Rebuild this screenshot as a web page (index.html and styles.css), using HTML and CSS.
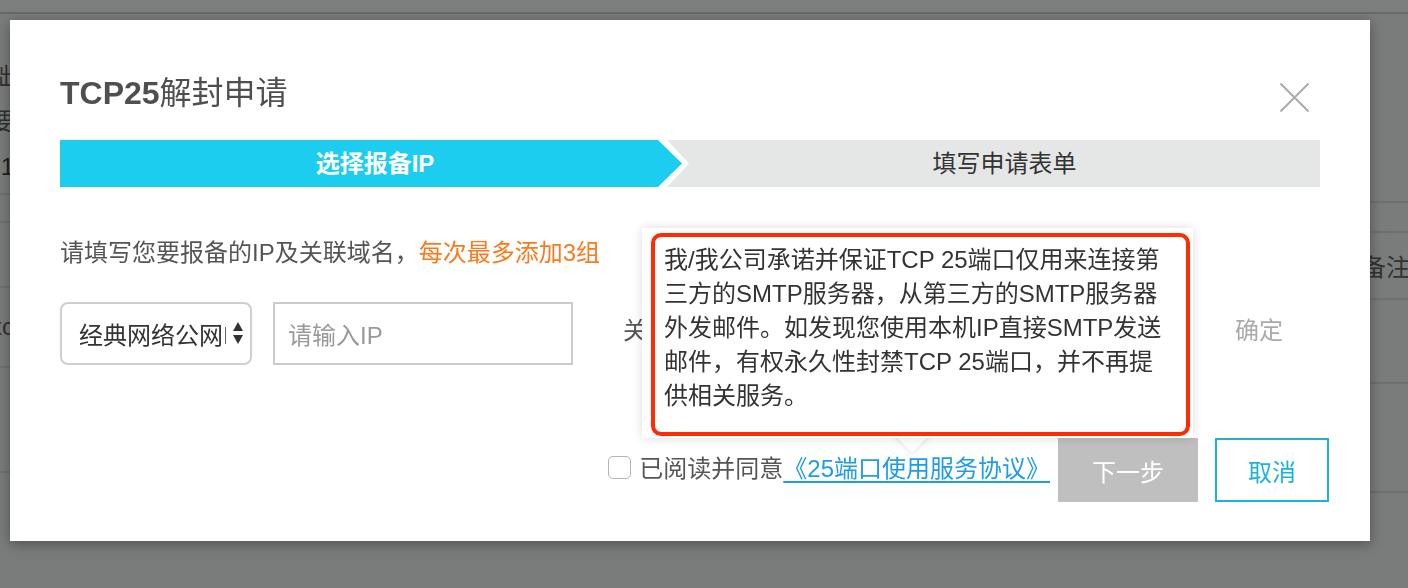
FILE: index.html
```html
<!DOCTYPE html>
<html lang="zh-CN">
<head>
<meta charset="utf-8">
<title>TCP25解封申请</title>
<link rel="stylesheet" href="styles.css">
</head>
<body>
<div class="page">
  <div class="topbar"></div>
  <div class="page-body">
    <div class="bg-col bg-left">
      <div class="bg-row bg-l1">
        <span class="bg-text">基础</span>
        <span class="bg-text">需要</span>
        <span class="bg-text bg-num">1</span>
      </div>
      <div class="bg-row bg-l2"></div>
      <div class="bg-row bg-l3"></div>
      <div class="bg-row bg-l4"><span class="bg-text">xc</span></div>
      <div class="bg-row bg-l5"></div>
    </div>
    <div class="bg-col bg-right">
      <div class="bg-row bg-r1"></div>
      <div class="bg-row bg-r2"></div>
      <div class="bg-row bg-r3"><span class="bg-text">备注</span></div>
      <div class="bg-row bg-r4"></div>
      <div class="bg-row bg-r5"></div>
    </div>
  </div>
</div>

<div class="modal">
  <div class="modal-header">
    <h2 class="modal-title"><b>TCP25</b>解封申请</h2>
    <svg class="close" width="29" height="29" viewBox="0 0 29 29" aria-label="关闭">
      <path d="M0.5 0.5L28.5 28.5M28.5 0.5L0.5 28.5" stroke="#ababab" stroke-width="2" fill="none"/>
    </svg>
  </div>

  <div class="steps">
    <div class="step step-active">选择报备IP</div>
    <div class="step step-next">填写申请表单</div>
  </div>

  <p class="hint">请填写您要报备的IP及关联域名，<span class="hint-em">每次最多添加3组</span></p>

  <div class="form-row">
    <div class="select">
      <span class="select-text">经典网络公网IP</span>
      <svg class="select-arrows" width="10" height="23" viewBox="0 0 10 23">
        <path d="M5 0L10 9H0Z" fill="#333"/>
        <path d="M0 13H10L5 22Z" fill="#333"/>
      </svg>
    </div>
    <div class="input input-ip">请输入IP</div>
    <span class="label">关联域名</span>
    <div class="input input-domain"></div>
    <span class="confirm">确定</span>
  </div>

  <div class="footer">
    <input type="checkbox" class="check">
    <span class="agree">已阅读并同意</span>
    <a class="agree-link" href="#">《25端口使用服务协议》</a>
    <button class="btn btn-next" type="button">下一步</button>
    <button class="btn btn-cancel" type="button">取消</button>
  </div>

  <div class="tooltip">
    我/我公司承诺并保证TCP 25端口仅用来连接第三方的SMTP服务器，从第三方的SMTP服务器外发邮件。如发现您使用本机IP直接SMTP发送邮件，有权永久性封禁TCP 25端口，并不再提供相关服务。
    <div class="annot"></div>
  </div>
</div>
</body>
</html>
```

FILE: styles.css
```css
* {
  box-sizing: border-box;
}

html,
body {
  margin: 0;
  height: 100%;
}

body {
  background: #7a7b7b;
  font-family: "Liberation Sans", "Noto Sans CJK SC", sans-serif;
  overflow: hidden;
}

/* ---------- dimmed page behind the dialog ---------- */
.page {
  height: 588px;
  display: flex;
  flex-direction: column;
}

.topbar {
  flex: none;
  height: 14px;
  background: #7d7e7e;
  border-bottom: 2px solid #686969;
}

.page-body {
  flex: 1;
  display: flex;
  justify-content: space-between;
}

.bg-col {
  overflow: hidden;
  display: flex;
  flex-direction: column;
}

.bg-left {
  width: 14px;
}

.bg-right {
  width: 46px;
}

.bg-row {
  flex: none;
  display: flex;
  flex-direction: column;
  justify-content: center;
  border-bottom: 2px solid #6f7070;
  font-size: 24px;
  color: #313232;
}

.bg-left .bg-row {
  align-items: flex-end;
}

.bg-text {
  white-space: nowrap;
}

.bg-num {
  color: #1f1f1f;
}

.bg-l1 {
  height: 181px;
  justify-content: flex-start;
  padding-top: 40px;
  line-height: 45px;
}

.bg-l2 { height: 28px; }
.bg-l3 { height: 65px; }
.bg-l4 { height: 80px; }
.bg-l5 { height: 105px; }

.bg-r1 { height: 189px; }
.bg-r2 { height: 30px; }
.bg-r3 { height: 67px; }
.bg-r4 { height: 84px; }
.bg-r5 { height: 109px; }

/* ---------- dialog ---------- */
.modal {
  position: fixed;
  left: 10px;
  top: 20px;
  width: 1360px;
  height: 521px;
  background: #fff;
  box-shadow: 0 3px 12px rgba(0, 0, 0, 0.35);
  padding: 53px 50px 0;
  display: flex;
  flex-direction: column;
}

.modal-header {
  display: flex;
  justify-content: space-between;
  align-items: flex-start;
}

.modal-title {
  margin: 0;
  font-size: 32px;
  line-height: 40px;
  font-weight: normal;
  color: #4f4f4f;
}

.modal-title b {
  font-weight: bold;
}

.close {
  margin: 10px 11px 0 0;
}

/* steps */
.steps {
  margin-top: 27px;
  height: 47px;
  display: flex;
}

.step {
  font-size: 24px;
  line-height: 47px;
  text-align: center;
  white-space: nowrap;
}

.step-active {
  flex: none;
  width: 622px;
  padding-left: 8px;
  background: #1dcdef;
  color: #fff;
  font-weight: bold;
  clip-path: polygon(0 0, 598px 0, 100% 50%, 598px 100%, 0 100%);
}

.step-next {
  flex: 1;
  margin-left: -15px;
  padding-left: 22px;
  background: #e5e6e6;
  color: #333;
  clip-path: polygon(0 0, 100% 0, 100% 100%, 0 100%, 22px 50%);
}

/* hint */
.hint {
  margin: 49px 0 0;
  font-size: 24px;
  line-height: 34px;
  color: #555;
}

.hint-em {
  color: #fd7a1c;
}

/* form row */
.form-row {
  margin-top: 32px;
  height: 63px;
  display: flex;
  align-items: flex-start;
}

.select {
  flex: none;
  width: 192px;
  height: 63px;
  border: 2px solid #cfcfcf;
  border-radius: 8px;
  padding-left: 17px;
  display: flex;
  align-items: center;
}

.select-text {
  width: 147px;
  overflow: hidden;
  white-space: nowrap;
  font-size: 24px;
  color: #333;
}

.select-arrows {
  flex: none;
  margin-left: 7px;
}

.input {
  flex: none;
  width: 300px;
  height: 63px;
  margin-left: 21px;
  padding-left: 13px;
  border: 2px solid #cbcbcb;
  display: flex;
  align-items: center;
  font-size: 24px;
  color: #999;
}

.label {
  margin-left: 50px;
  margin-top: 12px;
  font-size: 24px;
  line-height: 34px;
  color: #555;
  white-space: nowrap;
}

.confirm {
  margin-left: auto;
  margin-right: 37px;
  margin-top: 12px;
  font-size: 24px;
  line-height: 34px;
  color: #aaa;
}

/* footer */
.footer {
  margin-top: 73px;
  margin-right: -9px;
  height: 64px;
  display: flex;
  justify-content: flex-end;
  align-items: center;
  font-size: 24px;
}

.check {
  appearance: none;
  -webkit-appearance: none;
  width: 23px;
  height: 23px;
  margin: 0 8px 6px 0;
  border: 1.5px solid #b5b5b5;
  border-radius: 5px;
  background: #fff;
}

.agree {
  margin-bottom: 8px;
  color: #555;
  white-space: nowrap;
}

.agree-link {
  margin-bottom: 8px;
  color: #1e9bf0;
  text-decoration: underline;
  text-decoration-thickness: 2px;
  text-underline-offset: 4px;
  white-space: nowrap;
}

.btn {
  height: 64px;
  font-family: inherit;
  font-size: 24px;
  border-radius: 0;
  cursor: pointer;
}

.btn-next {
  width: 140px;
  margin-left: 8px;
  border: none;
  background: #bfbfbf;
  color: #fff;
}

.btn-cancel {
  width: 114px;
  margin-left: 17px;
  border: 2px solid #1db3d8;
  background: #fff;
  color: #1db3d8;
}

/* tooltip */
.tooltip {
  position: absolute;
  left: 632px;
  top: 208px;
  width: 551px;
  padding: 15px 21px 25px 22px;
  background: #fff;
  box-shadow: 0 0 10px rgba(0, 0, 0, 0.14);
  font-size: 24px;
  line-height: 34px;
  color: #333;
}

.tooltip::before {
  content: "";
  position: absolute;
  left: 256px;
  top: 191px;
  width: 28px;
  height: 28px;
  background: #fff;
  box-shadow: 0 0 6px rgba(0, 0, 0, 0.14);
  transform: rotate(45deg);
  z-index: -1;
}

.annot {
  position: absolute;
  left: 9px;
  top: 5px;
  right: 3px;
  bottom: 2px;
  border: 4px solid #fe2b06;
  border-radius: 10px;
  pointer-events: none;
}
```
